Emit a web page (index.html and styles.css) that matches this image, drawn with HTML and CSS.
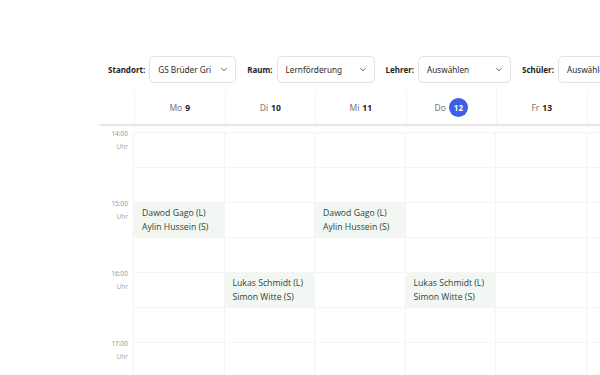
FILE: index.html
```html
<!DOCTYPE html>
<html lang="de">
<head>
  <meta charset="UTF-8">
  <title>Stundenplan</title>
  <link rel="stylesheet" href="styles.css">
</head>
<body>
  <div class="page">
    <!-- Filter -->
    <div class="filters">
      <div class="filter">
        <label>Standort:</label>
        <div class="select w-standort"><span>GS Brüder Gri</span><svg viewBox="0 0 10 6"><path d="M1.5 1.2 5 4.6 8.5 1.2"/></svg></div>
      </div>
      <div class="filter">
        <label>Raum:</label>
        <div class="select w-raum"><span>Lernförderung</span><svg viewBox="0 0 10 6"><path d="M1.5 1.2 5 4.6 8.5 1.2"/></svg></div>
      </div>
      <div class="filter">
        <label>Lehrer:</label>
        <div class="select w-lehrer"><span>Auswählen</span><svg viewBox="0 0 10 6"><path d="M1.5 1.2 5 4.6 8.5 1.2"/></svg></div>
      </div>
      <div class="filter">
        <label>Schüler:</label>
        <div class="select w-schueler"><span>Auswählen</span></div>
      </div>
    </div>

    <!-- Kalender -->
    <div class="calendar">
      <div class="head">
        <div class="gutter"></div>
        <div class="day-head">Mo <b>9</b></div>
        <div class="day-head">Di <b>10</b></div>
        <div class="day-head">Mi <b>11</b></div>
        <div class="day-head">Do <b class="today">12</b></div>
        <div class="day-head">Fr <b>13</b></div>
        <div class="day-head"></div>
      </div>

      <div class="body">
        <div class="times">
          <div class="hour"><span>14:00</span><span class="uhr">Uhr</span></div>
          <div class="hour"><span>15:00</span><span class="uhr">Uhr</span></div>
          <div class="hour"><span>16:00</span><span class="uhr">Uhr</span></div>
          <div class="hour"><span>17:00</span><span class="uhr">Uhr</span></div>
        </div>

        <div class="day">
          <div class="slot"></div><div class="slot"></div>
          <div class="slot"><div class="event">Dawod Gago (L)<br>Aylin Hussein (S)</div></div><div class="slot"></div>
          <div class="slot"></div><div class="slot"></div>
          <div class="slot"></div><div class="slot"></div>
        </div>
        <div class="day">
          <div class="slot"></div><div class="slot"></div>
          <div class="slot"></div><div class="slot"></div>
          <div class="slot"><div class="event">Lukas Schmidt (L)<br>Simon Witte (S)</div></div><div class="slot"></div>
          <div class="slot"></div><div class="slot"></div>
        </div>
        <div class="day">
          <div class="slot"></div><div class="slot"></div>
          <div class="slot"><div class="event">Dawod Gago (L)<br>Aylin Hussein (S)</div></div><div class="slot"></div>
          <div class="slot"></div><div class="slot"></div>
          <div class="slot"></div><div class="slot"></div>
        </div>
        <div class="day">
          <div class="slot"></div><div class="slot"></div>
          <div class="slot"></div><div class="slot"></div>
          <div class="slot"><div class="event">Lukas Schmidt (L)<br>Simon Witte (S)</div></div><div class="slot"></div>
          <div class="slot"></div><div class="slot"></div>
        </div>
        <div class="day">
          <div class="slot"></div><div class="slot"></div>
          <div class="slot"></div><div class="slot"></div>
          <div class="slot"></div><div class="slot"></div>
          <div class="slot"></div><div class="slot"></div>
        </div>
        <div class="day">
          <div class="slot"></div><div class="slot"></div>
          <div class="slot"></div><div class="slot"></div>
          <div class="slot"></div><div class="slot"></div>
          <div class="slot"></div><div class="slot"></div>
        </div>
      </div>
    </div>
  </div>
</body>
</html>
```

FILE: styles.css
```css
body {
  margin: 0;
  background: #fff;
  font-family: "Noto Sans", "Open Sans", sans-serif;
  color: #222;
  overflow: hidden;
}
.page {
  width: 600px;
  height: 375px;
  overflow: hidden;
}
.filters {
  display: flex;
  align-items: center;
  padding: 56px 0 0 108px;
  white-space: nowrap;
  width: 800px;
}
.filter {
  display: flex;
  align-items: center;
  margin-right: 11px;
}
.filter label {
  font-size: 8px;
  font-weight: 700;
  color: #1e1e1e;
  margin-right: 4px;
}
.select {
  display: flex;
  align-items: center;
  justify-content: space-between;
  box-sizing: border-box;
  height: 27px;
  padding: 0 7px 0 8px;
  border: 1px solid #e2e2e2;
  border-radius: 5px;
  font-size: 8.2px;
  color: #2a2a2a;
  background: #fff;
}
.select svg {
  width: 8px;
  height: 5px;
  fill: none;
  stroke: #555;
  stroke-width: 1.1;
}
.w-standort { width: 87px; }
.w-raum { width: 98px; }
.w-lehrer { width: 93px; }
.w-schueler { width: 90px; }

.calendar {
  margin: 7px 0 0 100px;
  width: 600px;
}
.head {
  display: flex;
  height: 34px;
  border-bottom: 2px solid #e6e6e6;
}
.gutter {
  width: 34px;
  flex: none;
  border-right: 1px solid #f3f3f3;
}
.day-head {
  width: 90.5px;
  flex: none;
  box-sizing: border-box;
  border-right: 1px solid #f3f3f3;
  display: flex;
  align-items: center;
  justify-content: center;
  gap: 3px;
  font-size: 8.5px;
  color: #777;
}
.day-head b {
  color: #222;
  font-weight: 700;
}
.day-head b.today {
  width: 19px;
  height: 19px;
  border-radius: 50%;
  background: #3d5ee6;
  color: #fff;
  display: flex;
  align-items: center;
  justify-content: center;
  font-size: 8px;
}
.body {
  display: flex;
  padding-top: 6px;
}
.times {
  width: 34px;
  flex: none;
  border-right: 1px solid #f3f3f3;
  box-sizing: border-box;
}
.hour {
  height: 70px;
  display: flex;
  flex-direction: column;
  align-items: flex-end;
  padding-right: 5px;
  font-size: 6.5px;
  color: #999;
  line-height: 13px;
  margin-top: -5px;
  margin-bottom: 5px;
}
.hour .uhr {
  color: #b3aa92;
}
.day {
  width: 90.5px;
  flex: none;
  box-sizing: border-box;
  border-right: 1px solid #f3f3f3;
}
.slot {
  height: 35px;
  box-sizing: border-box;
  border-top: 1px solid #f5f5f5;
}
.event {
  height: 34px;
  margin: 0 -1px 0 0;
  box-sizing: border-box;
  background: #f2f7f3;
  border-radius: 4px;
  padding: 3px 8px;
  font-family: "Open Sans", "Noto Sans", sans-serif;
  font-size: 8.7px;
  line-height: 14px;
  color: #2c4636;
}
```
